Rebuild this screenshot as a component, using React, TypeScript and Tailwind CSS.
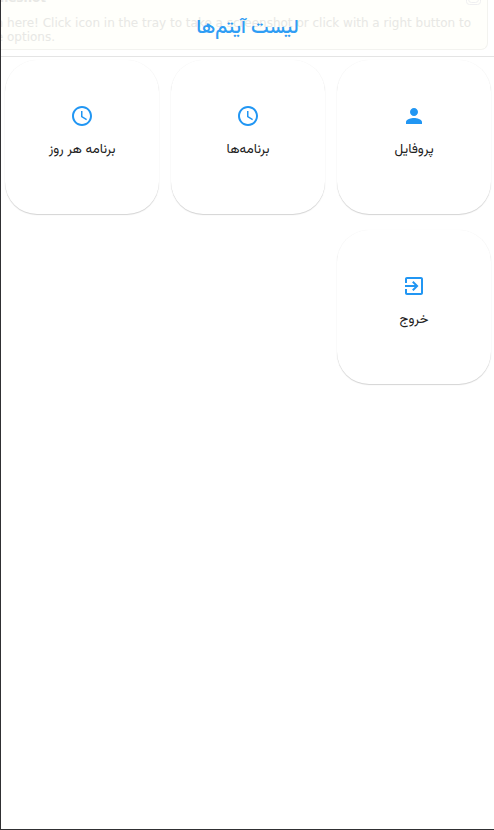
import React from "react";

const ICONS = {
  person:
    "M12 12c2.21 0 4-1.79 4-4s-1.79-4-4-4-4 1.79-4 4 1.79 4 4 4zm0 2c-2.67 0-8 1.34-8 4v2h16v-2c0-2.66-5.33-4-8-4z",
  clock:
    "M11.99 2C6.47 2 2 6.48 2 12s4.47 10 9.99 10C17.52 22 22 17.52 22 12S17.52 2 11.99 2zM12 20c-4.42 0-8-3.58-8-8s3.58-8 8-8 8 3.58 8 8-3.58 8-8 8zm.5-13H11v6l5.25 3.15.75-1.23-4.5-2.67z",
  exit:
    "M10.09 15.59L11.5 17l5-5-5-5-1.41 1.41L12.67 11H3v2h9.67l-2.58 2.59zM19 3H5c-1.11 0-2 .9-2 2v4h2V5h14v14H5v-4H3v4c0 1.1.89 2 2 2h14c1.1 0 2-.9 2-2V5c0-1.1-.9-2-2-2z",
};

const items: { label: string; icon: keyof typeof ICONS }[] = [
  { label: "پروفایل", icon: "person" },
  { label: "برنامه‌ها", icon: "clock" },
  { label: "برنامه هر روز", icon: "clock" },
  { label: "خروج", icon: "exit" },
];

function Card({ label, icon }: (typeof items)[number]) {
  return (
    <div className="flex h-[154px] flex-col items-center rounded-[32px] bg-white pt-11 shadow-[0_1px_1px_rgba(0,0,0,0.17),0_0_1px_rgba(0,0,0,0.06)]">
      <svg viewBox="0 0 24 24" className="size-6 shrink-0 fill-[#2196f3]">
        <path d={ICONS[icon]} />
      </svg>
      <span className="mt-3 text-[13.5px] leading-5 whitespace-nowrap text-[#212121]">{label}</span>
    </div>
  );
}

function Notification() {
  return (
    <div
      dir="ltr"
      className="pointer-events-none absolute top-0 left-0 flex h-[50px] w-[487px] flex-col justify-end overflow-hidden rounded-br-[7px] border-r border-b border-[#f3f3ef] bg-[#fffffb] pb-[5px] font-['DejaVu_Sans',sans-serif] text-[12px] leading-[14px] whitespace-nowrap text-[#e8e8e5]"
    >
      <div className="mb-[11px] flex items-center justify-between pr-[6px]">
        <div className="flex w-[45px] shrink-0 justify-end font-bold">Flameshot</div>
        <svg className="h-[14px] w-[15px]" viewBox="0 0 15 14" fill="none" stroke="#efeff1">
          <rect x=".5" y=".5" width="14" height="13" rx="3" />
          <rect x="2.5" y="1.5" width="10" height="10" rx="3" />
        </svg>
      </div>
      <div className="flex w-[470px] justify-end">
        <span>Hello, I'm here! Click icon in the tray to take a screenshot or click with a right button to</span>
      </div>
      <div className="flex w-[54px] justify-end">
        <span>see more options.</span>
      </div>
    </div>
  );
}

export default function App() {
  return (
    <main
      dir="rtl"
      className="relative h-[830px] w-[494px] overflow-hidden border-b border-l border-[#303033] bg-white font-['Vazirmatn','Vazir','DejaVu_Sans',sans-serif]"
    >
      <Notification />
      <header className="relative flex h-[57px] items-center justify-center border-b border-[#e4e4e4] pt-px">
        <h1 className="text-[19.6px] leading-7 font-medium text-[#2f9df4]">لیست آیتم‌ها</h1>
      </header>
      <section className="grid grid-cols-[repeat(3,154px)] gap-x-3 gap-y-4 pt-[3px] pr-[3px]">
        {items.map((item) => (
          <Card key={item.label} {...item} />
        ))}
      </section>
    </main>
  );
}
